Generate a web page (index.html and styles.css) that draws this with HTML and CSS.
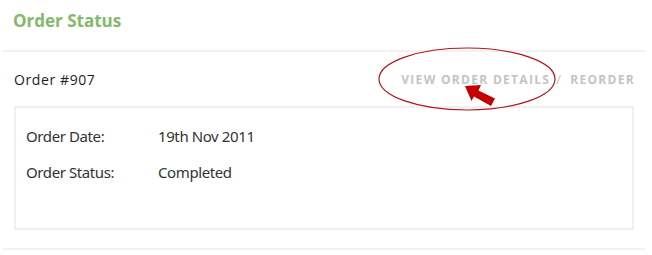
FILE: index.html
```html
<!DOCTYPE html>
<html lang="en">
<head>
    <meta charset="UTF-8">
    <title>Order Status</title>
    <link rel="stylesheet" href="styles.css">
</head>
<body>
    <div class="panel">
        <h2 class="panel-title">Order Status</h2>

        <!-- single order -->
        <div class="order">
            <div class="order-head">
                <span class="order-no">Order #907</span>
                <div class="order-links">
                    <a href="#">View Order Details</a>
                    <span class="sep">/</span>
                    <a href="#">Reorder</a>
                </div>
                <!-- red annotation around the link -->
                <svg class="callout" width="186" height="70" viewBox="0 0 186 70">
                    <ellipse cx="90" cy="33" rx="88" ry="31" fill="none" stroke="#b3141c" stroke-width="1.2"/>
                    <polygon points="88,40 104,39 101.5,44.5 118,52.5 114,60 97,50.5 94.5,55" fill="#c40000"/>
                </svg>
            </div>
            <div class="order-body">
                <div class="row">
                    <span class="label">Order Date:</span>
                    <span class="value">19th Nov 2011</span>
                </div>
                <div class="row">
                    <span class="label">Order Status:</span>
                    <span class="value">Completed</span>
                </div>
            </div>
        </div>
    </div>
</body>
</html>
```

FILE: styles.css
```css
body {
    margin: 0;
    padding: 0;
    background: #fff;
    font-family: "Open Sans", Arial, sans-serif;
    color: #222;
}
.panel {
    width: 642px;
    margin-left: 3px;
}
.panel-title {
    margin: 0;
    height: 50px;
    padding: 0 10px;
    line-height: 42px;
    font-size: 17px;
    font-weight: 700;
    color: #84b96b;
    border-bottom: 2px solid #f2f2f2;
}
.order {
    border-bottom: 2px solid #f2f2f2;
    padding-bottom: 18px;
}
.order-head {
    position: relative;
    display: flex;
    justify-content: space-between;
    align-items: center;
    height: 54px;
    padding: 0 10px 0 11px;
}
.order-no {
    font-size: 14px;
    font-weight: 500;
    letter-spacing: 0.6px;
    color: #1e1e1e;
    margin-top: 1px;
}
.order-links {
    display: flex;
    align-items: center;
    font-size: 12px;
    font-weight: 700;
    letter-spacing: 1.3px;
    text-transform: uppercase;
    color: #c4c4c4;
}
.order-links a {
    color: #c4c4c4;
    text-decoration: none;
}
.order-links .sep {
    margin: 0 8px 0 6px;
    font-weight: 400;
    font-size: 13px;
}
.callout {
    position: absolute;
    left: 374px;
    top: -6px;
}
.order-body {
    margin: 0 11px;
    padding: 10px 10px 0;
    box-sizing: border-box;
    height: 124px;
    border: 2px solid #f0f0f0;
    font-family: "Noto Sans", Arial, sans-serif;
    font-size: 15px;
    color: #333;
}
.row {
    display: flex;
    height: 36px;
    align-items: center;
    letter-spacing: -0.4px;
}
.label {
    width: 132px;
}
```
